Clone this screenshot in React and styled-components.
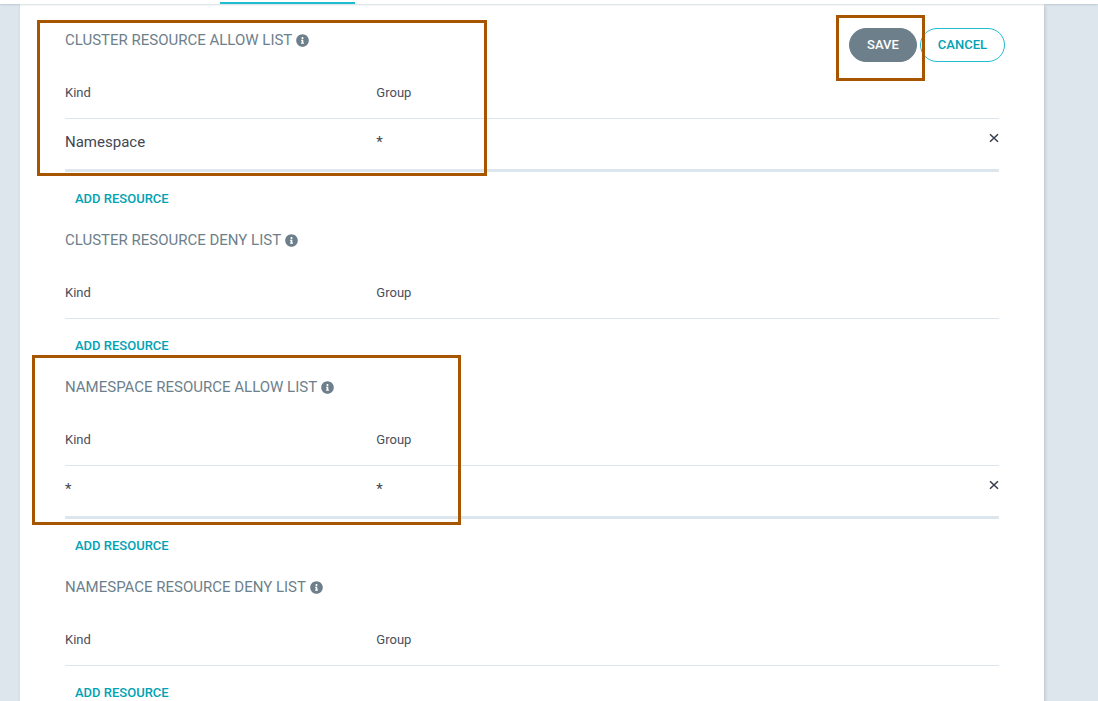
import React from 'react';
import styled, { createGlobalStyle } from 'styled-components';
import { FaInfoCircle } from 'react-icons/fa';

const GlobalStyle = createGlobalStyle`
  *, *::before, *::after { box-sizing: border-box; }
  body {
    margin: 0;
    background: #dee6ed;
    color: #4a4d5c;
    font-family: Roboto, "Liberation Sans", sans-serif;
  }
`;

const Page = styled.div`
  display: flex;
  flex-direction: column;
  height: 100vh;
`;

const TabBar = styled.nav`
  position: relative;
  z-index: 1;
  flex: none;
  display: flex;
  align-items: flex-end;
  height: 4px;
  padding-left: 220px;
  background: #fff;
  box-shadow: 0 1px 2px rgba(93, 128, 140, 0.25);
`;

const ActiveTab = styled.span`
  width: 135px;
  height: 2px;
  background: #1fbdd0;
`;

const Scroller = styled.main`
  flex: 1;
  min-height: 0;
  overflow-y: auto;
  scrollbar-width: none;
`;

const Panel = styled.div`
  position: relative;
  margin: 0 54px 0 20px;
  padding: 24px 45px 0;
  background: #fff;
  box-shadow: 1px 2px 3px rgba(93, 118, 120, 0.3);
`;

const Actions = styled.div`
  position: absolute;
  top: 24px;
  right: 39px;
  display: flex;
  gap: 3px;
`;

const SaveSlot = styled.div`
  position: relative;
`;

const PillButton = styled.button`
  height: 34px;
  padding: 0 17px;
  border: 1px solid ${(p) => (p.$filled ? '#6d7f8b' : '#1fbdd0')};
  border-radius: 17px;
  background: ${(p) => (p.$filled ? '#6d7f8b' : '#fff')};
  color: ${(p) => (p.$filled ? '#fff' : '#00a2b3')};
  font: 500 13px/16px Roboto, sans-serif;
  text-transform: uppercase;
  cursor: pointer;
`;

const Callout = styled.span`
  position: absolute;
  z-index: 2;
  top: ${(p) => p.$top}px;
  left: ${(p) => p.$left}px;
  width: ${(p) => p.$width}px;
  height: ${(p) => p.$height}px;
  border: 3px solid #a85500;
  pointer-events: none;
`;

const Section = styled.section`
  position: relative;
  padding-bottom: 11px;
`;

const Title = styled.h2`
  display: flex;
  align-items: center;
  gap: 4px;
  margin: 0 0 14px;
  color: #6d7f8b;
  font-size: 15px;
  font-weight: 400;
  line-height: 24px;
  text-transform: uppercase;
`;

const Table = styled.table`
  width: 100%;
  table-layout: fixed;
  border-collapse: separate;
  border-spacing: 0;
`;

const HeadCell = styled.th`
  height: 53px;
  padding: 2px 0 0;
  border-bottom: 1px solid #dee6ed;
  color: #4a4d5c;
  font-size: 13px;
  font-weight: 400;
  line-height: 20px;
  text-align: left;
`;

const Cell = styled.td`
  height: 53px;
  padding: 0 0 4px;
  border-bottom: 3px solid #dee6ed;
  color: #434652;
  font-size: 15px;
  line-height: 20px;
`;

const ActionCell = styled(Cell)`
  padding-bottom: 12px;
  text-align: right;
`;

const RemoveButton = styled.button`
  display: inline-flex;
  padding: 0;
  border: 0;
  background: none;
  color: #363c4a;
  cursor: pointer;
`;

const AddButton = styled.button`
  display: block;
  height: 36px;
  margin-top: 9px;
  padding: 0 10px;
  border: 0;
  background: none;
  color: #00a2b3;
  font: 500 13px/16px Roboto, sans-serif;
  text-transform: uppercase;
  cursor: pointer;
`;

const lists = [
  {
    title: 'Cluster resource allow list',
    rows: [{ kind: 'Namespace', group: '*' }],
    callout: { $top: -8, $left: -28, $width: 450, $height: 156 },
  },
  { title: 'Cluster resource deny list', rows: [] },
  {
    title: 'Namespace resource allow list',
    rows: [{ kind: '*', group: '*' }],
    callout: { $top: -20, $left: -33, $width: 429, $height: 170 },
  },
  { title: 'Namespace resource deny list', rows: [] },
];

function ResourceList({ title, rows, callout }) {
  return (
    <Section>
      <Title>
        {title}
        <FaInfoCircle size={13} aria-hidden="true" />
      </Title>
      <Table aria-label={title}>
        <thead>
          <tr>
            <HeadCell scope="col">Kind</HeadCell>
            <HeadCell scope="col">Group</HeadCell>
            <HeadCell as="td" />
          </tr>
        </thead>
        <tbody>
          {rows.map((row) => (
            <tr key={row.kind}>
              <Cell>{row.kind}</Cell>
              <Cell>{row.group}</Cell>
              <ActionCell>
                <RemoveButton type="button" aria-label={`Remove ${row.kind}`}>
                  <svg width="10" height="10" viewBox="0 0 10 10" aria-hidden="true">
                    <path d="M1 1.2 9 8.8M9 1.2 1 8.8" stroke="currentColor" strokeWidth="1.5" />
                  </svg>
                </RemoveButton>
              </ActionCell>
            </tr>
          ))}
        </tbody>
      </Table>
      <AddButton type="button">Add resource</AddButton>
      {callout && <Callout {...callout} />}
    </Section>
  );
}

export default function App() {
  return (
    <Page>
      <GlobalStyle />
      <TabBar>
        <ActiveTab />
      </TabBar>
      <Scroller>
        <Panel>
          {lists.map((list) => (
            <ResourceList key={list.title} {...list} />
          ))}
          <Actions>
            <SaveSlot>
              <PillButton type="button" $filled>Save</PillButton>
              <Callout $top={-13} $left={-13} $width={89} $height={66} />
            </SaveSlot>
            <PillButton type="button">Cancel</PillButton>
          </Actions>
        </Panel>
      </Scroller>
    </Page>
  );
}
